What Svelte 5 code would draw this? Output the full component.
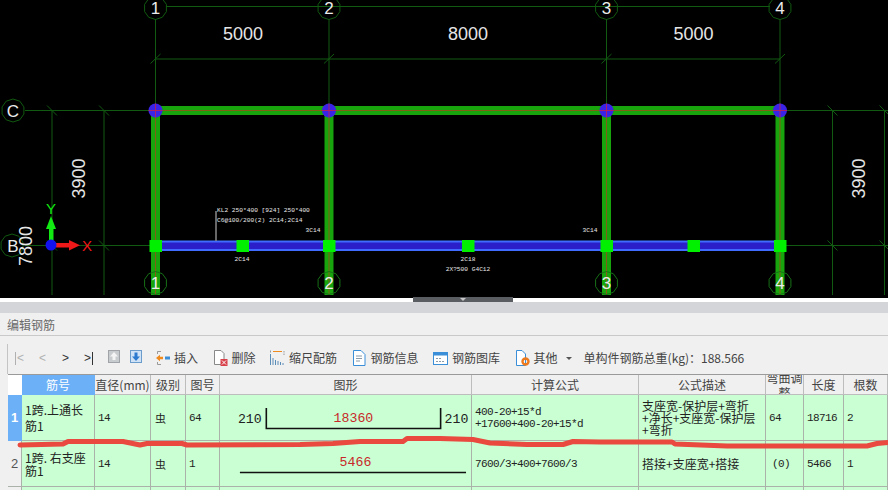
<script lang="ts">
	const axes = [
		{ label: '1', x: 155.5 },
		{ label: '2', x: 329 },
		{ label: '3', x: 606.5 },
		{ label: '4', x: 780 },
	];
	const spans = [
		{ text: '5000', x: 243 },
		{ text: '8000', x: 468 },
		{ text: '5000', x: 693.5 },
	];
	const rebarNodes = [155.5, 242.5, 329, 468, 606.5, 693.5, 780];
	const smallText = [
		{ text: '3C14', x: 313, y: 232 },
		{ text: '2C14', x: 242, y: 261 },
		{ text: '2C18', x: 468, y: 261 },
		{ text: '2X?500 G4C12', x: 468, y: 271 },
		{ text: '3C14', x: 590, y: 232 },
	];

	function bubble(cx: number, cy: number, r = 11.5) {
		const pts = [];
		for (let i = 0; i < 10; i++) {
			const a = (Math.PI * 2 * i) / 10 + Math.PI / 10;
			pts.push(`${(cx + r * Math.cos(a)).toFixed(1)},${(cy + r * Math.sin(a)).toFixed(1)}`);
		}
		return pts.join(' ');
	}

	const columns = ['筋号', '直径(mm)', '级别', '图号', '图形', '计算公式', '公式描述', '弯曲调整', '长度', '根数'];

	const redLine =
		'20,445 63,444 68,441.5 123,441.5 140,445 147,443.5 182,443.5 187,445 300,444.5 333,443.5 360,441.5 403,441.5 407,438.5 440,438.5 473,439.5 490,443 527,444.5 563,444.5 573,441.5 600,442 672,442 675,444 727,446 867,446 877,443.5 888,442.5';
</script>

<div class="app">
	<svg class="cad" width="888" height="298" viewBox="0 0 888 298">
		<rect width="888" height="298" fill="#000" />

		<!-- axis lines -->
		<g stroke="#115a11" stroke-width="1" fill="none">
			<line x1="166" y1="6.5" x2="770" y2="6.5" />
			<line x1="155.5" y1="59" x2="780" y2="59" />
			<line x1="25" y1="110.5" x2="155" y2="110.5" />
			<line x1="785" y1="110.5" x2="888" y2="110.5" />
			<line x1="25" y1="245.5" x2="155" y2="245.5" />
			<line x1="785" y1="245.5" x2="888" y2="245.5" />
			<line x1="52" y1="110" x2="52" y2="295" />
			<line x1="104" y1="110" x2="104" y2="295" />
			<line x1="832.5" y1="110" x2="832.5" y2="295" />
			<line x1="884.5" y1="110" x2="884.5" y2="295" />
			{#each [52, 104, 832.5, 884.5] as x}
				<line x1={x - 5} y1="105.5" x2={x + 5} y2="115.5" />
				<line x1={x - 5} y1="240.5" x2={x + 5} y2="250.5" />
			{/each}
			{#each axes as a}
				<line x1={a.x} y1="19" x2={a.x} y2="106" />
				<line x1={a.x - 5} y1="63.5" x2={a.x + 5} y2="54" />
				<polygon points={bubble(a.x, 8)} />
			{/each}
			<polygon points={bubble(13, 110.5)} />
			<polygon points={bubble(12, 245.5)} />
		</g>

		<!-- beams and columns -->
		<rect x="155" y="106" width="625" height="9" fill="#17a40d" />
		<line x1="155" y1="110.5" x2="780" y2="110.5" stroke="#a8441a" stroke-width="1" opacity="0.75" />
		{#each axes as a}
			<rect x={a.x - 4.5} y="110" width="9" height="185" fill="#17a40d" />
			<line x1={a.x} y1="110" x2={a.x} y2="295" stroke="#a8441a" stroke-width="1" opacity="0.75" />
		{/each}

		<!-- selected rebar span -->
		<rect x="160" y="240.5" width="620" height="10.5" fill="#3f6cff" />
		<rect x="160" y="242.5" width="620" height="6.5" fill="#2a1fc8" />
		<line x1="216" y1="211" x2="216" y2="241" stroke="#8a8a8a" stroke-width="1.5" />
		{#each rebarNodes as x}
			<rect x={x - 6} y="240" width="12.5" height="12" fill="#00f000" />
		{/each}

		<!-- column nodes -->
		{#each axes as a}
			<circle cx={a.x} cy="110.5" r="7" fill="#3a22e6" />
			<line x1={a.x - 7} y1="110.5" x2={a.x + 7} y2="110.5" stroke="#c8204c" opacity="0.8" />
			<line x1={a.x} y1="103.5" x2={a.x} y2="117.5" stroke="#c8204c" opacity="0.8" />
		{/each}

		<!-- bottom bubbles sit on the columns -->
		{#each axes as a}
			<polygon points={bubble(a.x, 283)} fill="none" stroke="#177017" />
		{/each}

		<!-- text -->
		<g class="cad-text">
			{#each axes as a}
				<text x={a.x} y="14" text-anchor="middle" class="bubble-text">{a.label}</text>
				<text x={a.x} y="289" text-anchor="middle" class="bubble-text">{a.label}</text>
			{/each}
			<text x="13" y="117" text-anchor="middle" class="bubble-text">C</text>
			<text x="13" y="252" text-anchor="middle" class="bubble-text">B</text>
			{#each spans as s}
				<text x={s.x} y="39.5" text-anchor="middle" class="dim-text">{s.text}</text>
			{/each}
			<text transform="translate(84.5 178.5) rotate(-90)" text-anchor="middle" class="dim-text">3900</text>
			<text transform="translate(864.5 178.5) rotate(-90)" text-anchor="middle" class="dim-text">3900</text>
			<text transform="translate(32 246) rotate(-90)" text-anchor="middle" class="dim-text">7800</text>
			<text x="217" y="211.5" class="note">KL2 250*400 [924] 250*400</text>
			<text x="217" y="222" class="note">C6@100/200(2) 2C14;2C14</text>
			{#each smallText as t}
				<text x={t.x} y={t.y} text-anchor="middle" class="note">{t.text}</text>
			{/each}
		</g>

		<!-- coordinate gizmo -->
		<rect x="56" y="243" width="15" height="4.5" fill="#f01818" />
		<polygon points="69,240 80,245.2 69,250.5" fill="#f01818" />
		<rect x="49" y="226" width="4.5" height="15" fill="#12e812" />
		<polygon points="46,229 51,216 56,229" fill="#12e812" />
		<circle cx="51" cy="245" r="5.5" fill="#1212f0" />
		<text x="87" y="251" text-anchor="middle" class="axis-x">X</text>
		<text x="51" y="214" text-anchor="middle" class="axis-y">Y</text>

		<!-- splitter handle -->
		<rect x="413" y="297" width="100" height="1" fill="#5a5d62" />
	</svg>

	<div class="splitter">
		<div class="handle"><span class="handle-arrow"></span></div>
	</div>
	<div class="grey-band"></div>
	<div class="title">编辑钢筋</div>

	<div class="toolbar">
		<div class="nav">
			<span class="nav-btn muted"><i class="bar"></i>&lt;</span>
			<span class="nav-btn muted">&lt;</span>
			<span class="nav-btn">&gt;</span>
			<span class="nav-btn">&gt;<i class="bar dark"></i></span>
		</div>

		<svg class="move up" width="12" height="13" viewBox="0 0 12 13">
			<rect x="0.5" y="0.5" width="11" height="12" fill="#c9cccf" stroke="#a0a4a8" />
			<path d="M6 2 L10 6.5 H7.5 V10 H4.5 V6.5 H2 Z" fill="#f4f4f4" />
		</svg>
		<svg class="move" width="12" height="13" viewBox="0 0 12 13">
			<rect x="0.5" y="0.5" width="11" height="12" fill="#cfe2f6" stroke="#6c9ccc" />
			<path d="M4.5 2.5 H7.5 V6.5 H10 L6 11 L2 6.5 H4.5 Z" fill="#2b7ad0" />
		</svg>

		<div class="tool first">
			<svg width="15" height="16" viewBox="0 0 15 16" fill="none">
				<path d="M2.5 1.5 H6 M2.5 14.5 H6 M2.5 1.5 V4 M2.5 12 V14.5" stroke="#999" />
				<path d="M1 8 L5 4.8 V6.8 H8 V9.2 H5 V11.2 Z" fill="#ee8a1e" />
				<rect x="10" y="6.5" width="5" height="3" fill="#3a8fd8" />
			</svg>
			<span>插入</span>
		</div>
		<div class="tool">
			<svg width="15" height="16" viewBox="0 0 15 16" fill="none">
				<path d="M1.5 0.5 H8 L11 3.5 V14.5 H1.5 Z" fill="#fff" stroke="#888" />
				<rect x="7.5" y="9" width="7" height="7" fill="#d8404a" />
				<path d="M9 10.5 L13 14.5 M13 10.5 L9 14.5" stroke="#fff" />
			</svg>
			<span>删除</span>
		</div>
		<div class="tool">
			<svg width="15" height="16" viewBox="0 0 15 16" fill="none">
				<path d="M0.5 4 V15 M3 8 V15 M5.5 10 V15 M8 11 V15 M10.5 12 V15 M13 13 V15" stroke="#5a8cb8" />
				<path d="M3 1.5 H12" stroke="#ee8a1e" />
				<path d="M14 1 V6" stroke="#999" stroke-dasharray="1.5 1" />
				<path d="M0.5 0.5 V2.5" stroke="#999" />
			</svg>
			<span>缩尺配筋</span>
		</div>
		<div class="tool">
			<svg width="15" height="16" viewBox="0 0 15 16" fill="none">
				<path d="M1.5 0.5 H9 L13 4.5 V15.5 H1.5 Z" fill="#fff" stroke="#3a8fd8" />
				<path d="M4 6 H10 M4 8.5 H10 M4 11 H8" stroke="#8a9aa8" />
			</svg>
			<span>钢筋信息</span>
		</div>
		<div class="tool">
			<svg width="15" height="13" viewBox="0 0 15 13" fill="none">
				<rect x="0.5" y="0.5" width="14" height="12" fill="#fff" stroke="#3a8fd8" />
				<rect x="0.5" y="0.5" width="14" height="3" fill="#3a8fd8" />
				<path d="M3 6.5 H8 M3 9.5 H12" stroke="#8a9aa8" stroke-dasharray="2 1" />
			</svg>
			<span>钢筋图库</span>
		</div>
		<div class="tool">
			<svg width="15" height="16" viewBox="0 0 15 16" fill="none">
				<path d="M1.5 0.5 H7 L10.5 4 V15.5 H1.5 Z" fill="#fff" stroke="#3a8fd8" />
				<circle cx="10.5" cy="11.5" r="3" stroke="#ee7a1e" stroke-width="2.4" />
			</svg>
			<span>其他</span>
			<i class="caret"></i>
		</div>
		<div class="total">单构件钢筋总重(kg)：188.566</div>
	</div>

	<div class="table">
		<div class="row head">
			<div class="cell corner"></div>
			{#each columns as col, i}
				<div class="cell" class:active={i === 0} class:wrap={i === 7}><span>{col}</span></div>
			{/each}
		</div>

		<div class="row data">
			<div class="cell num current">1</div>
			<div class="cell name loose">1跨.上通长筋1</div>
			<div class="cell code">14</div>
			<div class="cell grade">虫</div>
			<div class="cell code">64</div>
			<div class="cell shape">
				<svg width="252" height="46" viewBox="0 0 252 46">
					<text x="18" y="28" class="shape-text">210</text>
					<path d="M46.5 13 V33.5 H221.5 V13" fill="none" stroke="#111" stroke-width="1.6" />
					<text x="134" y="27" text-anchor="middle" class="shape-red">18360</text>
					<text x="225.5" y="28" class="shape-text">210</text>
				</svg>
			</div>
			<div class="cell code formula">400-20+15*d<br />+17600+400-20+15*d</div>
			<div class="cell desc">支座宽-保护层+弯折+净长+支座宽-保护层+弯折</div>
			<div class="cell code">64</div>
			<div class="cell code">18716</div>
			<div class="cell code">2</div>
		</div>

		<div class="row data">
			<div class="cell num">2</div>
			<div class="cell name">1跨. 右支座筋1</div>
			<div class="cell code">14</div>
			<div class="cell grade">虫</div>
			<div class="cell code">1</div>
			<div class="cell shape">
				<svg width="252" height="45" viewBox="0 0 252 45">
					<path d="M20 31.5 H247" fill="none" stroke="#111" stroke-width="1.6" />
					<text x="136" y="25" text-anchor="middle" class="shape-red">5466</text>
				</svg>
			</div>
			<div class="cell code formula">7600/3+400+7600/3</div>
			<div class="cell desc">搭接+支座宽+搭接</div>
			<div class="cell code center">(0)</div>
			<div class="cell code">5466</div>
			<div class="cell code">1</div>
		</div>

		<div class="row data">
			<div class="cell num blank"></div>
			{#each columns as _}
				<div class="cell"></div>
			{/each}
		</div>
	</div>

	<svg class="scribble" width="888" height="490" viewBox="0 0 888 490">
		<polyline points={redLine} fill="none" stroke="#e9493f" stroke-width="5" stroke-linecap="round" stroke-linejoin="round" />
	</svg>
</div>

<style>
	:global(body) {
		margin: 0;
	}

	.app {
		position: relative;
		width: 888px;
		height: 490px;
		overflow: hidden;
		display: flex;
		flex-direction: column;
		background: #f0f0f0;
		font-family: 'Noto Sans CJK SC', 'Liberation Sans', sans-serif;
		font-size: 12px;
		color: #444;
	}

	.cad {
		display: block;
		flex: none;
	}

	.bubble-text {
		font: 17px 'Liberation Sans', sans-serif;
		fill: #ececec;
	}

	.dim-text {
		font: 18px 'Liberation Sans', sans-serif;
		fill: #e6e6e6;
	}

	.note {
		font: 6.2px 'Liberation Mono', monospace;
		fill: #e8e8e8;
	}

	.axis-x {
		font: 15px 'Liberation Sans', sans-serif;
		fill: #f01818;
	}

	.axis-y {
		font: 15px 'Liberation Sans', sans-serif;
		fill: #12e812;
	}

	.splitter {
		flex: none;
		height: 4px;
		background: #fff;
		display: flex;
		justify-content: center;
	}

	.handle {
		width: 100px;
		height: 4px;
		margin-left: 38px;
		background: #5a5d62;
		display: flex;
		justify-content: center;
	}

	.handle-arrow {
		width: 0;
		height: 0;
		border: 3px solid transparent;
		border-top-color: #c8c8c8;
		border-bottom: 0;
	}

	.grey-band {
		flex: none;
		height: 11px;
		background: #d4d5d8;
	}

	.title {
		flex: none;
		height: 23px;
		box-sizing: border-box;
		padding-left: 7px;
		line-height: 23px;
		color: #6a6a6a;
		border-bottom: 1px solid #c9c9c9;
		background: #f0f0f0;
	}

	.toolbar {
		flex: none;
		height: 38px;
		box-sizing: border-box;
		padding: 14px 0 0 8px;
		display: flex;
		align-items: flex-start;
		position: relative;
		white-space: nowrap;
		line-height: 16px;
	}

	.toolbar::before {
		content: '';
		position: absolute;
		left: 7px;
		top: 8px;
		bottom: 0;
		width: 1px;
		background: #c4c4c4;
	}

	.nav {
		display: flex;
		width: 92px;
		height: 16px;
		font-family: 'Liberation Sans', sans-serif;
		color: #333;
	}

	.nav-btn {
		flex: 1;
		display: flex;
		align-items: center;
		justify-content: center;
		gap: 1px;
	}

	.nav-btn.muted {
		color: #b0b0b0;
	}

	.bar {
		width: 1px;
		height: 13px;
		background: #b0b0b0;
	}

	.bar.dark {
		background: #333;
	}

	.move {
		flex: none;
		margin-top: 0;
		margin-left: 10px;
	}

	.move.up {
		margin-left: 8px;
	}

	.tool {
		flex: none;
		display: flex;
		align-items: center;
		gap: 4px;
		margin-left: 14.5px;
		height: 16px;
	}

	.tool.first {
		margin-left: 13px;
	}

	.caret {
		width: 0;
		height: 0;
		margin-left: 4px;
		border: 3px solid transparent;
		border-top-color: #555;
		border-bottom: 0;
	}

	.total {
		margin-left: 12px;
	}

	.table {
		flex: 1;
		margin-left: 8px;
		border-top: 1px solid #9a9a9a;
		overflow: hidden;
	}

	.row {
		display: grid;
		grid-template-columns: 14px 73px 56px 35px 34px 252px 167px 127px 38px 40px 44px;
	}

	.head {
		height: 20px;
	}

	.cell {
		box-sizing: border-box;
		border-right: 1px solid #aab2aa;
		border-bottom: 1px solid #aab2aa;
		display: flex;
		align-items: center;
		overflow: hidden;
		min-width: 0;
	}

	.head .cell {
		justify-content: center;
		background: #f0f0f0;
		border-color: #bdbdbd;
		line-height: 15px;
		text-align: center;
	}

	.head .corner {
		background: #fff;
		border: 0;
	}

	.head .active {
		background: #6cb0f7;
		color: #fff;
		border-color: #6cb0f7;
	}

	.head .wrap span {
		display: block;
		flex: none;
		width: 36px;
	}

	.data {
		height: 46px;
		background: #c9ffd2;
		color: #222;
	}

	.num {
		justify-content: center;
		background: #f0f0f0;
		color: #555;
		font: 13px 'Liberation Sans', sans-serif;
	}

	.num.current {
		background: #6cb0f7;
		color: #fff;
		font-weight: bold;
		border-color: #6cb0f7;
	}

	.num.blank {
		background: #f0f0f0;
	}

	.name {
		padding: 0 3px;
		line-height: 13px;
		font-size: 12px;
	}

	.name.loose {
		line-height: 16px;
	}

	.code {
		padding-left: 3px;
		font: 11px/12px 'Liberation Mono', monospace;
		letter-spacing: -0.6px;
	}

	.code.center {
		padding-left: 6px;
	}

	.grade {
		padding-left: 4px;
		font-size: 11px;
	}

	.shape {
		padding: 0;
	}

	.shape svg {
		display: block;
	}

	.shape-text {
		font: 13.3px 'Liberation Mono', monospace;
		fill: #222;
	}

	.shape-red {
		font: 13.3px 'Liberation Mono', monospace;
		fill: #c8282a;
	}

	.desc {
		padding-left: 3px;
		line-height: 12px;
		font-size: 12px;
	}

	.scribble {
		position: absolute;
		left: 0;
		top: 0;
		pointer-events: none;
	}
</style>
